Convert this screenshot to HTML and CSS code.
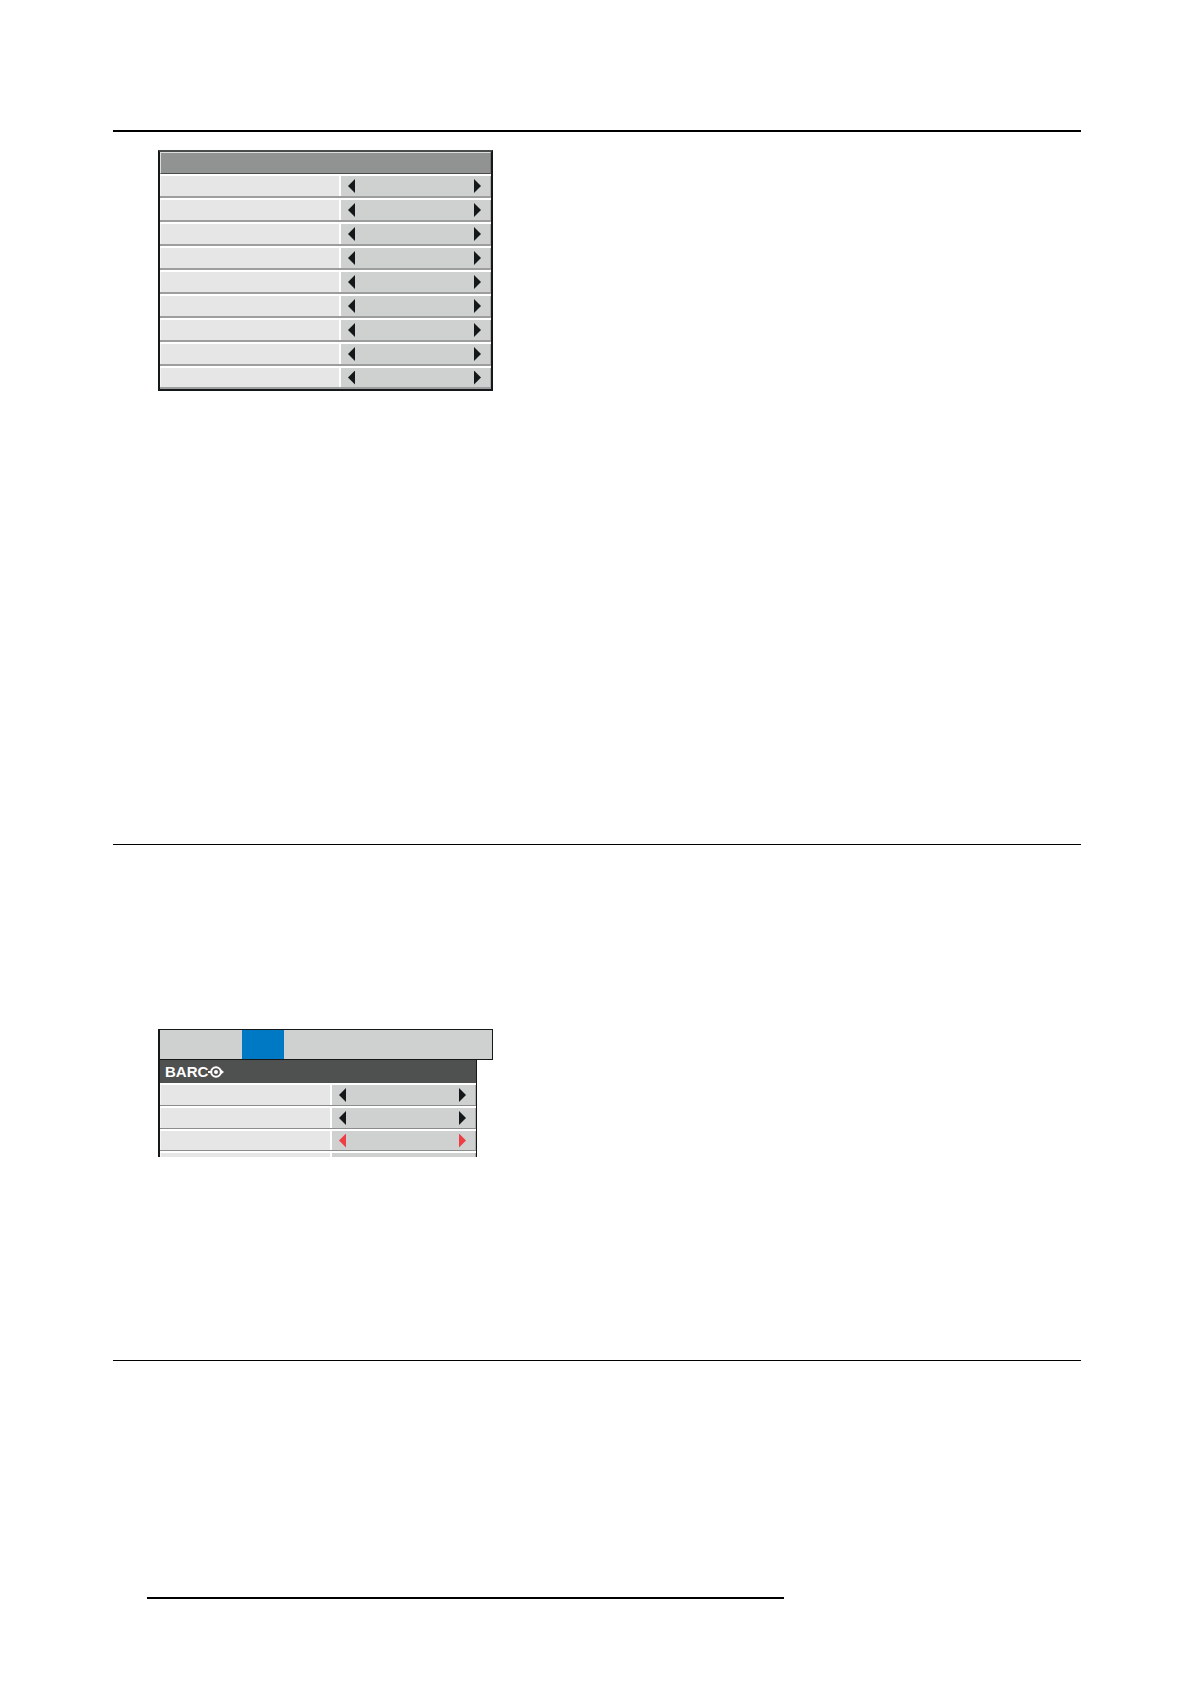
FILE: index.html
```
<!DOCTYPE html>
<html lang="en">
<head>
<meta charset="utf-8">
<title>Projector menus</title>
<link rel="stylesheet" href="styles.css">
</head>
<body>
<main class="page">
  <section class="section section-first">
    <div class="menu menu-full">
      <div class="menu-title"></div>
      <div class="row"><div class="label"></div><div class="value"><button class="arrow" aria-label="Previous"></button><button class="arrow next" aria-label="Next"></button></div></div>
      <div class="row"><div class="label"></div><div class="value"><button class="arrow" aria-label="Previous"></button><button class="arrow next" aria-label="Next"></button></div></div>
      <div class="row"><div class="label"></div><div class="value"><button class="arrow" aria-label="Previous"></button><button class="arrow next" aria-label="Next"></button></div></div>
      <div class="row"><div class="label"></div><div class="value"><button class="arrow" aria-label="Previous"></button><button class="arrow next" aria-label="Next"></button></div></div>
      <div class="row"><div class="label"></div><div class="value"><button class="arrow" aria-label="Previous"></button><button class="arrow next" aria-label="Next"></button></div></div>
      <div class="row"><div class="label"></div><div class="value"><button class="arrow" aria-label="Previous"></button><button class="arrow next" aria-label="Next"></button></div></div>
      <div class="row"><div class="label"></div><div class="value"><button class="arrow" aria-label="Previous"></button><button class="arrow next" aria-label="Next"></button></div></div>
      <div class="row"><div class="label"></div><div class="value"><button class="arrow" aria-label="Previous"></button><button class="arrow next" aria-label="Next"></button></div></div>
      <div class="row row-last"><div class="label"></div><div class="value"><button class="arrow" aria-label="Previous"></button><button class="arrow next" aria-label="Next"></button></div></div>
    </div>
  </section>
  <section class="section section-middle">
    <nav class="tabs"><button class="tab-active" aria-label="Current tab"></button></nav>
    <div class="menu menu-cut">
      <div class="brand">
        <span class="brand-name">BARC</span>
        <svg class="brand-eye" width="16" height="14" viewBox="0 0 16 14" aria-hidden="true">
          <path d="M0 7H3" stroke="#fff" stroke-width="2"/>
          <path d="M11 3L16 7L11 11Z" fill="#fff"/>
          <circle cx="8" cy="7" r="4.8" fill="#4f5150" stroke="#fff" stroke-width="2"/>
          <circle cx="8" cy="7" r="2" fill="#fff"/>
        </svg>
      </div>
      <div class="row"><div class="label"></div><div class="value"><button class="arrow" aria-label="Previous"></button><button class="arrow next" aria-label="Next"></button></div></div>
      <div class="row"><div class="label"></div><div class="value"><button class="arrow" aria-label="Previous"></button><button class="arrow next" aria-label="Next"></button></div></div>
      <div class="row row-last selected"><div class="label"></div><div class="value"><button class="arrow" aria-label="Previous"></button><button class="arrow next" aria-label="Next"></button></div></div>
      <div class="row row-cut"><div class="label"></div><div class="value"></div></div>
    </div>
  </section>
  <section class="section section-last"></section>
</main>
<footer class="footer"></footer>
</body>
</html>
```
FILE: styles.css
```
* { box-sizing: border-box; }
body {
  margin: 0;
  background: #fff;
  font-family: "Liberation Sans", Arial, sans-serif;
}
.page { padding: 130px 109px 0 113px; }
.section {
  border-top: 1px solid #000;
  padding-left: 45px;
}
.section-first {
  border-top-width: 2px;
  padding-top: 18px;
  padding-bottom: 453px;
}
.section-middle {
  padding-top: 184px;
  padding-bottom: 203px;
}
.section-last { min-height: 237px; }
.menu { border: 2px solid #151818; }
.menu-full {
  --row: 24px;
  --label: 181px;
  --inset: 9px;
  max-width: 335px;
  border-top-color: #4a4c4c;
}
.menu-title {
  height: 22px;
  background: #919393;
  border: 1px solid #dcdedd;
  border-right-color: #777;
  border-bottom-color: #4a4c4c;
}
.row {
  display: grid;
  grid-template-columns: var(--label) 1fr;
  height: var(--row);
  border-top: 2px solid #fff;
  border-bottom: 1px solid #8b8d8c;
}
.menu-full .row { border-bottom: 2px solid #9c9e9d; }
.row-last { height: calc(var(--row) - 1px); }
.label {
  background: #e6e6e6;
  border-left: 1px solid #f4f4f4;
  border-right: 2px solid #fff;
}
.value {
  display: flex;
  justify-content: space-between;
  align-items: center;
  padding: 0 var(--inset) 0 7px;
  background: #cfd1d0;
  border-right: 1px solid #aaacab;
}
.arrow {
  width: 7px;
  height: 14px;
  padding: 0;
  border: 0;
  background: #151818;
  clip-path: polygon(0 50%, 100% 0, 100% 100%);
}
.next { clip-path: polygon(0 0, 100% 50%, 0 100%); }
.selected .arrow { background: #ee3d43; }
.tabs {
  display: flex;
  max-width: 335px;
  height: 31px;
  padding-left: 82px;
  background: #cfd1d0;
  border: 1px solid #151818;
  border-left-width: 2px;
}
.tab-active {
  width: 42px;
  padding: 0;
  border: 0;
  background: #0079c5;
}
.menu-cut {
  --row: 23px;
  --label: 172px;
  --inset: 9px;
  max-width: 319px;
  border-width: 0 1px 0 2px;
}
.brand {
  display: flex;
  align-items: center;
  height: 23px;
  padding-left: 5px;
  background: #4f5150;
  color: #fff;
}
.brand-name {
  font-size: 15px;
  line-height: 22px;
  font-weight: 700;
}
.row-cut {
  height: 6px;
  border-bottom: 0;
}
.footer {
  margin: 0 406px 85px 147px;
  border-top: 2px solid #000;
}
```
